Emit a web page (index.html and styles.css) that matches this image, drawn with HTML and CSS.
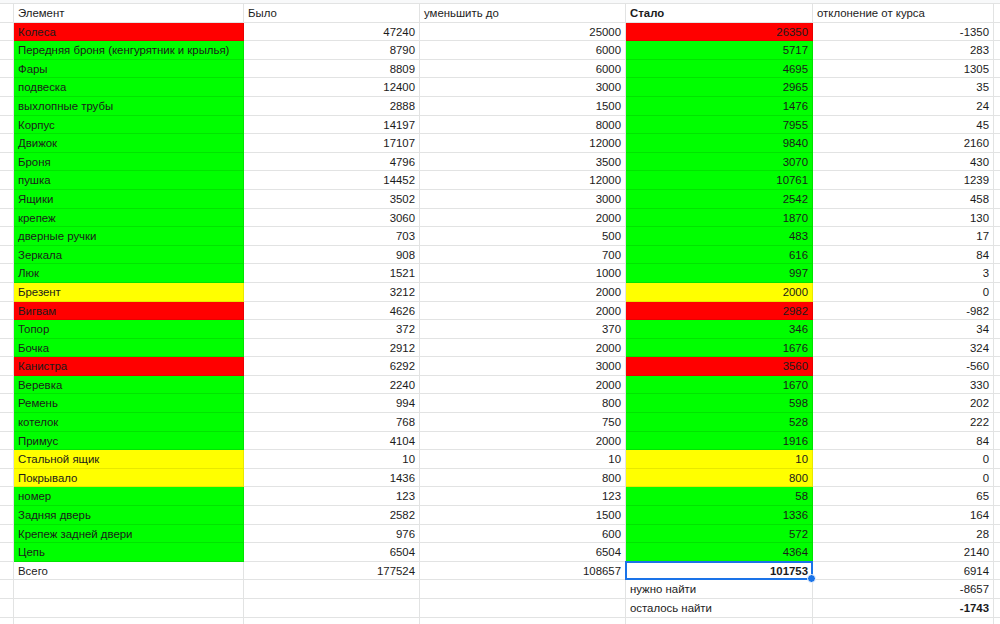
FILE: index.html
```html
<!DOCTYPE html>
<html lang="ru">
<head>
<meta charset="utf-8">
<link rel="stylesheet" href="styles.css">
</head>
<body>
<div class="topbar"></div>
<div class="sheet">
  <div class="c g"></div><div class="c">Элемент</div><div class="c">Было</div><div class="c">уменьшить до</div><div class="c b">Стало</div><div class="c">отклонение от курса</div><div class="c e"></div>

  <div class="c g"></div><div class="c red">Колеса</div><div class="c n">47240</div><div class="c n">25000</div><div class="c n red">26350</div><div class="c n">-1350</div><div class="c e"></div>
  <div class="c g"></div><div class="c grn">Передняя броня (кенгурятник и крылья)</div><div class="c n">8790</div><div class="c n">6000</div><div class="c n grn">5717</div><div class="c n">283</div><div class="c e"></div>
  <div class="c g"></div><div class="c grn">Фары</div><div class="c n">8809</div><div class="c n">6000</div><div class="c n grn">4695</div><div class="c n">1305</div><div class="c e"></div>
  <div class="c g"></div><div class="c grn">подвеска</div><div class="c n">12400</div><div class="c n">3000</div><div class="c n grn">2965</div><div class="c n">35</div><div class="c e"></div>
  <div class="c g"></div><div class="c grn">выхлопные трубы</div><div class="c n">2888</div><div class="c n">1500</div><div class="c n grn">1476</div><div class="c n">24</div><div class="c e"></div>
  <div class="c g"></div><div class="c grn">Корпус</div><div class="c n">14197</div><div class="c n">8000</div><div class="c n grn">7955</div><div class="c n">45</div><div class="c e"></div>
  <div class="c g"></div><div class="c grn">Движок</div><div class="c n">17107</div><div class="c n">12000</div><div class="c n grn">9840</div><div class="c n">2160</div><div class="c e"></div>
  <div class="c g"></div><div class="c grn">Броня</div><div class="c n">4796</div><div class="c n">3500</div><div class="c n grn">3070</div><div class="c n">430</div><div class="c e"></div>
  <div class="c g"></div><div class="c grn">пушка</div><div class="c n">14452</div><div class="c n">12000</div><div class="c n grn">10761</div><div class="c n">1239</div><div class="c e"></div>
  <div class="c g"></div><div class="c grn">Ящики</div><div class="c n">3502</div><div class="c n">3000</div><div class="c n grn">2542</div><div class="c n">458</div><div class="c e"></div>
  <div class="c g"></div><div class="c grn">крепеж</div><div class="c n">3060</div><div class="c n">2000</div><div class="c n grn">1870</div><div class="c n">130</div><div class="c e"></div>
  <div class="c g"></div><div class="c grn">дверные ручки</div><div class="c n">703</div><div class="c n">500</div><div class="c n grn">483</div><div class="c n">17</div><div class="c e"></div>
  <div class="c g"></div><div class="c grn">Зеркала</div><div class="c n">908</div><div class="c n">700</div><div class="c n grn">616</div><div class="c n">84</div><div class="c e"></div>
  <div class="c g"></div><div class="c grn">Люк</div><div class="c n">1521</div><div class="c n">1000</div><div class="c n grn">997</div><div class="c n">3</div><div class="c e"></div>
  <div class="c g"></div><div class="c yel">Брезент</div><div class="c n">3212</div><div class="c n">2000</div><div class="c n yel">2000</div><div class="c n">0</div><div class="c e"></div>
  <div class="c g"></div><div class="c red">Вигвам</div><div class="c n">4626</div><div class="c n">2000</div><div class="c n red">2982</div><div class="c n">-982</div><div class="c e"></div>
  <div class="c g"></div><div class="c grn">Топор</div><div class="c n">372</div><div class="c n">370</div><div class="c n grn">346</div><div class="c n">34</div><div class="c e"></div>
  <div class="c g"></div><div class="c grn">Бочка</div><div class="c n">2912</div><div class="c n">2000</div><div class="c n grn">1676</div><div class="c n">324</div><div class="c e"></div>
  <div class="c g"></div><div class="c red">Канистра</div><div class="c n">6292</div><div class="c n">3000</div><div class="c n red">3560</div><div class="c n">-560</div><div class="c e"></div>
  <div class="c g"></div><div class="c grn">Веревка</div><div class="c n">2240</div><div class="c n">2000</div><div class="c n grn">1670</div><div class="c n">330</div><div class="c e"></div>
  <div class="c g"></div><div class="c grn">Ремень</div><div class="c n">994</div><div class="c n">800</div><div class="c n grn">598</div><div class="c n">202</div><div class="c e"></div>
  <div class="c g"></div><div class="c grn">котелок</div><div class="c n">768</div><div class="c n">750</div><div class="c n grn">528</div><div class="c n">222</div><div class="c e"></div>
  <div class="c g"></div><div class="c grn">Примус</div><div class="c n">4104</div><div class="c n">2000</div><div class="c n grn">1916</div><div class="c n">84</div><div class="c e"></div>
  <div class="c g"></div><div class="c yel">Стальной ящик</div><div class="c n">10</div><div class="c n">10</div><div class="c n yel">10</div><div class="c n">0</div><div class="c e"></div>
  <div class="c g"></div><div class="c yel">Покрывало</div><div class="c n">1436</div><div class="c n">800</div><div class="c n yel">800</div><div class="c n">0</div><div class="c e"></div>
  <div class="c g"></div><div class="c grn">номер</div><div class="c n">123</div><div class="c n">123</div><div class="c n grn">58</div><div class="c n">65</div><div class="c e"></div>
  <div class="c g"></div><div class="c grn">Задняя дверь</div><div class="c n">2582</div><div class="c n">1500</div><div class="c n grn">1336</div><div class="c n">164</div><div class="c e"></div>
  <div class="c g"></div><div class="c grn">Крепеж задней двери</div><div class="c n">976</div><div class="c n">600</div><div class="c n grn">572</div><div class="c n">28</div><div class="c e"></div>
  <div class="c g"></div><div class="c grn">Цепь</div><div class="c n">6504</div><div class="c n">6504</div><div class="c n grn">4364</div><div class="c n">2140</div><div class="c e"></div>

  <div class="c g"></div><div class="c">Всего</div><div class="c n">177524</div><div class="c n">108657</div><div class="c n b sel">101753<span class="handle"></span></div><div class="c n">6914</div><div class="c e"></div>
  <div class="c g"></div><div class="c"></div><div class="c"></div><div class="c"></div><div class="c">нужно найти</div><div class="c n">-8657</div><div class="c e"></div>
  <div class="c g"></div><div class="c"></div><div class="c"></div><div class="c"></div><div class="c">осталось найти</div><div class="c n b">-1743</div><div class="c e"></div>
  <div class="c g"></div><div class="c"></div><div class="c"></div><div class="c"></div><div class="c"></div><div class="c"></div><div class="c e"></div>
</div>
</body>
</html>
```

FILE: styles.css
```css
html, body {
  margin: 0;
  padding: 0;
  background: #fff;
  overflow: hidden;
}
body {
  font-family: "Liberation Sans", Arial, sans-serif;
  font-size: 11.4px;
  color: #1b1b1b;
  width: 1000px;
  height: 624px;
}
.topbar {
  height: 3px;
  background: #f8f9fa;
  border-bottom: 1px solid #e2e3e3;
}
.sheet {
  display: grid;
  grid-template-columns: 14px 230px 176px 206px 187px 181px 1fr;
  grid-auto-rows: 18.6px;
}
.c {
  box-sizing: border-box;
  border-right: 1px solid #e2e3e3;
  border-bottom: 1px solid #e2e3e3;
  padding: 1px 4px 0 4px;
  line-height: 17.6px;
  white-space: nowrap;
  overflow: hidden;
  position: relative;
}
.g { padding: 0; }
.e { border-right: none; padding: 0; }
.n { text-align: right; padding-right: 4px; }
.b { font-weight: bold; }
.red { background: #ff0000; border-bottom-color: #e80000; border-right-color: #e80000; }
.grn { background: #00ff00; border-bottom-color: #00e400; border-right-color: #00e400; }
.yel { background: #ffff00; border-bottom-color: #e8e800; border-right-color: #e8e800; }
.sel { overflow: visible; }
.sel::before {
  content: "";
  position: absolute;
  left: -1px;
  top: -1px;
  right: -1px;
  bottom: -1px;
  border: 2px solid #1a73e8;
  pointer-events: none;
}
.handle {
  position: absolute;
  right: -4px;
  bottom: -4px;
  width: 7px;
  height: 7px;
  border-radius: 50%;
  background: #1a73e8;
  border: 1px solid #fff;
  z-index: 2;
}
```
